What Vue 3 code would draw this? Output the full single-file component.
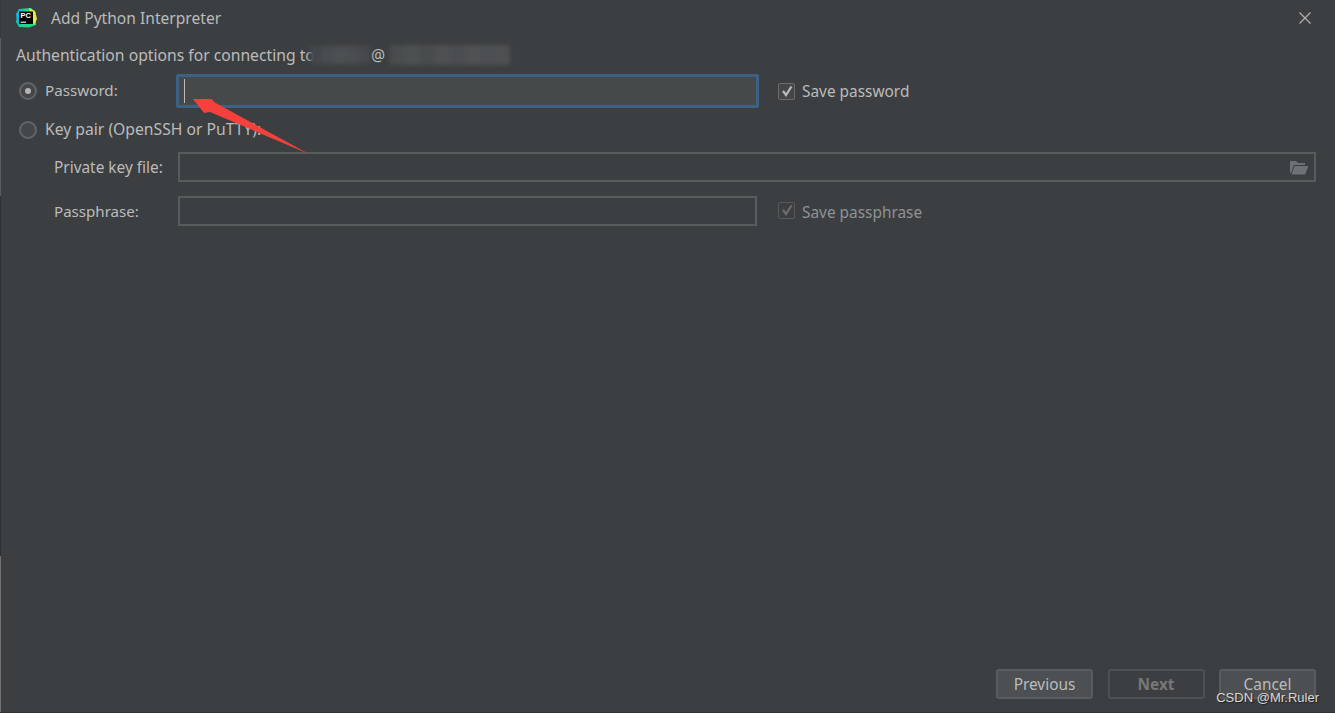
<script setup>
const buttons = [
  { label: 'Previous', kind: 'normal' },
  { label: 'Next', kind: 'off' },
  { label: 'Cancel', kind: 'normal' },
]
const smearA = ['#44474a', '#4a4d4f', '#4d5052', '#4b4e50', '#47494c']
const smearB = ['#4a4d4f', '#4d5051', '#494c4e', '#4e5052', '#4b4e50', '#4f5153', '#4c4f51', '#4e5052']
</script>

<template>
  <div class="dialog">
    <header class="titlebar">
      <svg class="logo" width="21" height="20" viewBox="0 0 21 20">
        <path d="M3 1 L15 0 L20 5 L20 17 L13 19.5 L3 19 L0 14 Z" fill="#21d789" />
        <path d="M13 0 L19 3 L21 11 L18 17 L15 10 Z" fill="#e8e84a" />
        <path d="M0 6 L3 1 L8 2 L4 19 L1 15 Z" fill="#10b8d8" />
        <rect x="3" y="3.5" width="14" height="12.5" fill="#000" />
        <text x="4.4" y="10" class="logo-text">PC</text>
        <rect x="4.6" y="13.6" width="5.5" height="1.1" fill="#fff" />
      </svg>
      <span class="title">Add Python Interpreter</span>
      <svg class="close" width="12" height="12" viewBox="0 0 12 12">
        <path d="M.5 .5 L11.5 11.5 M11.5 .5 L.5 11.5" stroke="#b4b4b4" stroke-width="1.1" fill="none" />
      </svg>
    </header>

    <main class="content">
      <p class="auth">Authentication options for connecting to <span class="at">@</span></p>

      <div class="row row-password">
        <span class="radio radio-on"><i></i></span>
        <label class="radio-label label-password">Password:</label>
        <div class="input input-focus"><span class="caret"></span></div>
        <span class="check"><svg width="14" height="14" viewBox="0 0 14 14"><path d="M3 7 L6 11 L11.5 2.5" stroke="#bbbbbb" stroke-width="2.2" fill="none" /></svg></span>
        <span class="check-label label-save">Save password</span>
      </div>

      <div class="row row-key">
        <span class="radio"></span>
        <label class="radio-label label-key">Key pair (OpenSSH or PuTTY):</label>
      </div>

      <div class="row row-file">
        <label class="field-label">Private key file:</label>
        <div class="input input-wide">
          <svg class="folder" width="20" height="15" viewBox="0 0 20 15">
            <path d="M1 1 H7 L9 3 H16 V5 H5 L2 13 H1 Z" fill="#6e7274" />
            <path d="M5.5 6 H19.5 L16 14.5 H2.5 Z" fill="#6e7274" />
          </svg>
        </div>
      </div>

      <div class="row row-phrase">
        <label class="field-label label-phrase">Passphrase:</label>
        <div class="input input-plain"></div>
        <span class="check check-off"><svg width="14" height="14" viewBox="0 0 14 14"><path d="M3 7 L6 11 L11.5 2.5" stroke="#6b6e70" stroke-width="2.2" fill="none" /></svg></span>
        <span class="check-label label-off">Save passphrase</span>
      </div>
    </main>

    <footer class="footer">
      <button v-for="b in buttons" :key="b.label" class="btn" :class="'btn-' + b.kind">{{ b.label }}</button>
    </footer>

    <div class="smear smear-a">
      <i v-for="(c, n) in smearA" :key="n" :style="{ background: c }"></i>
    </div>
    <div class="smear smear-b">
      <i v-for="(c, n) in smearB" :key="n" :style="{ background: c }"></i>
    </div>
    <svg class="arrow" width="130" height="64" viewBox="0 0 130 64">
      <path d="M3 2 L22 2 L24 5 L119 57 L20 15 L14 16 Z" fill="#f5403c" />
    </svg>
    <span class="watermark">CSDN @Mr.Ruler</span>
  </div>
</template>

<style>
html, body { margin: 0; padding: 0; background: #3c3f41; overflow: hidden; }
</style>

<style scoped>
.dialog {
  position: relative;
  width: 1335px;
  height: 713px;
  display: flex;
  flex-direction: column;
  box-sizing: border-box;
  overflow: hidden;
  background: #3c3f41;
  color: #bbbbbb;
  font-family: "Noto Sans", "Open Sans", sans-serif;
  font-size: 15.4px;
  border-bottom: 1px solid #2f3133;
}
.dialog::before {
  content: "";
  position: absolute;
  left: 0;
  top: 0;
  bottom: 0;
  width: 1px;
  background: linear-gradient(to bottom,
    #36393b 0, #36393b 38px,
    #5c5e5f 38px, #5c5e5f 196px,
    #303234 196px, #303234 556px,
    #707070 556px, #707070 100%);
}
.titlebar {
  height: 36px;
  flex: none;
  display: flex;
  align-items: center;
  padding: 0 24px 0 16px;
}
.logo { flex: none; }
.logo-text { font-size: 7.5px; font-weight: 700; fill: #fff; font-family: "Liberation Sans", sans-serif; }
.title { margin-left: 14px; font-size: 15.6px; }
.close { margin-left: auto; }
.content { flex: 1; padding: 0 19px 0 0; }
.auth { margin: 0; height: 38px; line-height: 38px; padding-left: 16px; white-space: pre; font-size: 15.7px; }
.at { margin-left: 52px; }
.row { display: flex; align-items: center; }
.row-password { height: 34px; }
.row-key { height: 32px; margin-top: 6px; }
.row-file { height: 30px; margin-top: 6px; }
.row-phrase { height: 30px; margin-top: 14px; }
.radio {
  flex: none;
  width: 18px;
  height: 18px;
  margin-left: 19px;
  box-sizing: border-box;
  border: 2px solid #626567;
  border-radius: 50%;
  background: #43474a;
  display: flex;
  align-items: center;
  justify-content: center;
}
.radio i { width: 6px; height: 6px; border-radius: 50%; background: #b4b4b4; }
.radio-label { margin-left: 8px; white-space: nowrap; }
.label-password { width: 132px; margin-top: -2px; font-size: 15.2px; }
.label-key { font-size: 15.7px; margin-top: -2px; }
.field-label { width: 124px; margin-left: 54px; flex: none; }
.label-phrase { font-size: 15.1px; }
.input {
  box-sizing: border-box;
  height: 30px;
  border: 2px solid #595c5d;
  background: #3c3f41;
  display: flex;
  align-items: center;
  flex: none;
}
.input-focus {
  width: 583px;
  height: 34px;
  margin-left: -1px;
  background: #45494a;
  border: 3px solid #3d6185;
  border-radius: 2px;
  padding-left: 5px;
}
.caret { width: 1px; height: 24px; background: #bbbbbb; }
.input-wide { flex: 1; justify-content: flex-end; padding-right: 5px; }
.input-plain { width: 579px; }
.check {
  flex: none;
  box-sizing: border-box;
  width: 17px;
  height: 17px;
  margin-left: 19px;
  border: 1px solid #6b6b6b;
  border-radius: 2px;
  background: #43474a;
  display: flex;
  align-items: center;
  justify-content: center;
}
.check-off { margin-top: -2px; margin-left: 21px; border-color: #565859; background: #3c3f41; }
.check-label { margin-left: 7px; }
.label-save { margin-top: 1px; }
.label-off { color: #8f9294; margin-top: 2px; }
.footer {
  flex: none;
  display: flex;
  justify-content: flex-end;
  gap: 14.5px;
  padding: 0 19px 13px 0;
}
.btn {
  box-sizing: border-box;
  width: 97px;
  height: 30px;
  border-radius: 3px;
  font: inherit;
  padding: 0;
}
.btn-normal { background: #4c5052; border: 2px solid #595c5e; color: #bbbbbb; }
.btn-off { background: #3c3f41; border: 2px solid #4e5153; color: #777777; font-weight: 700; }
.smear { position: absolute; display: flex; filter: blur(2px); }
.smear i { flex: 1; }
.smear-a { left: 310px; top: 46px; width: 60px; height: 18px; }
.smear-b { left: 390px; top: 45px; width: 120px; height: 20px; }
.arrow { position: absolute; left: 190px; top: 97px; }
.watermark {
  position: absolute;
  right: 16px;
  bottom: 7px;
  font-family: "Liberation Sans", sans-serif;
  font-size: 13px;
  color: #d8d8d8;
  text-shadow: 1px 1px 1px #222;
}
</style>
